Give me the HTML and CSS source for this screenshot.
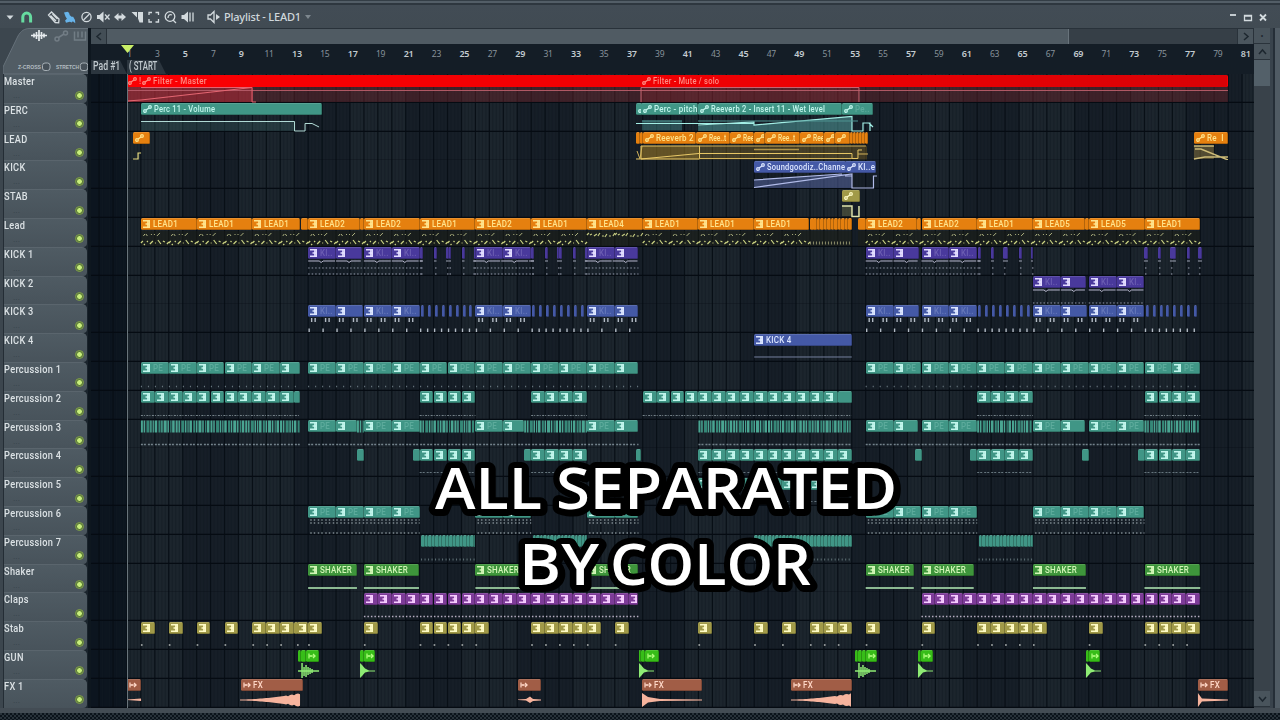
FILE: index.html
```html
<!DOCTYPE html>
<html lang="en">
<head>
<meta charset="UTF-8">
<meta name="viewport" content="width=device-width, initial-scale=1.0">
<title>Playlist - LEAD1</title>
<link rel="stylesheet" href="styles.css">
</head>
<body>
  <div id="frameTop"></div>
  <div id="toolbar">
    <svg class="tools" width="200" height="23" viewBox="0 0 200 23">
      <path class="solid" d="M6.500 10.500h7l-3.500 4z"/>
      <path class="magnet" d="M22.800 17.500v-5.500a3.900 3.900 0 0 1 7.800 0v5.500"/>
      <path class="line" d="M48.500 10l3-3 7.500 7-.3 3.800-3.500-.3zM50.500 10.500l5.500 5.500M52.500 9l5 5"/>
      <path class="brush" d="M64 7.500l3.500-.8 1.500 1 .8 2.600 2.200 1.800 1-.6 2 3.500.3 3.200-2.500-2-1 1.200-2-.7-3.800 1-.9-2.200 1.800-1.800-1.400-2.200z"/>
      <circle class="line" cx="86.500" cy="12" r="4.600"/><path class="line" d="M83.500 15l6-6"/>
      <path class="solid" d="M97 10h2.500l4-3.500v11l-4-3.500H97z"/><path class="line" d="M105 9.500l4.500 5m0-5l-4.500 5"/>
      <path class="solid" d="M114 12l4.500-4v2.500h3V8l4.500 4-4.500 4v-2.500h-3V16z"/>
      <path class="solid" d="M131.500 7h5.500v5.500zM138 7h5v10.500h-3.500l-1.500-4z"/>
      <path class="line" d="M149 10V7.500h3M155.500 7.500h3V10M158.500 14v3h-3M152 17h-3v-3"/>
      <circle class="line" cx="170" cy="11.500" r="4.800"/><path class="line" d="M173 15l3 3M168 13c0-3 2-4 4-3"/>
      <path class="solid" d="M181.500 10h2.500l4-3.500v11l-4-3.500h-2.500z"/><path class="line" d="M190 7.500v9M193 7.500v9"/>
    </svg>
    <svg class="speaker" width="14" height="14" viewBox="0 0 14 14">
      <path class="line" d="M1 5h2.500l3.500-3.500v11L3.500 9H1z"/><path class="solid" d="M9 4l4 3-4 3z"/>
    </svg>
    <span class="title">Playlist - LEAD1</span>
    <span class="caret"></span>
    <span class="winbuttons">
      <svg width="40" height="14" viewBox="0 0 40 14">
        <path class="thick" d="M2 4h6"/>
        <path class="line" d="M16.500 4.500h7v5h-7zM16.500 5h7"/>
        <path class="thick" d="M32 3.500l6 6m0-6l-6 6"/>
      </svg>
    </span>
  </div>

  <div id="window">
    <div id="side">
      <div id="corner">
        <svg width="86" height="46" viewBox="3 0 86 46">
          <path class="tab" d="M3 46V39L18 8C21 3 24 .5 30 .5H91V46z"/>
          <path class="wave" d="M31 7.500h16M34 5.500v4M36.500 4v7M39 2v11M41.500 4v7M44 5.500v4"/>
          <g class="off"><circle cx="57" cy="11" r="2"/><circle cx="65.500" cy="5" r="2"/><path d="M58.500 9.500l5.500-3.500"/><path d="M74.500 3.500v8.500h11v-8.500M78 3.500v6M82 3.500v6"/></g>
          <rect class="box" x="42.500" y="35" width="7.500" height="7.500" rx="2.500"/>
          <rect class="box" x="80.300" y="35" width="7.500" height="7.500" rx="2.500"/>
          <text x="18" y="41" textLength="23" lengthAdjust="spacingAndGlyphs">Z-CROSS</text>
          <text x="56" y="41" textLength="23" lengthAdjust="spacingAndGlyphs">STRETCH</text>
        </svg>
      </div>
      <div id="names"></div>
    </div>

    <div id="main">
      <div id="hscroll">
        <span class="arrow"><svg width="8" height="9" viewBox="0 0 8 9"><path d="M6 1L2 4.500 6 8"/></svg></span>
        <span class="thumb"></span>
        <span class="arrow end"><svg width="8" height="9" viewBox="0 0 8 9"><path d="M2 1l4 3.500L2 8"/></svg></span>
      </div>
      <div id="ruler">
        <div id="numbers"></div>
        <div id="markers"><span class="marker pad"><b>Pad #1</b></span><span class="marker start"><b>( START</b></span></div>
        <svg class="playpos" width="13" height="8" viewBox="0 0 13 8"><path d="M0 0h13L6.500 8z"/></svg>
      </div>
      <div id="lanes"><div class="playline"></div></div>
    </div>

    <div id="vscroll">
      <span class="cell">•</span>
      <span class="cell"><svg width="9" height="8" viewBox="0 0 9 8"><path d="M1 6l3.500-4L8 6"/></svg></span>
      <span class="thumb"></span>
      <span class="cell last"><svg width="9" height="8" viewBox="0 0 9 8"><path d="M1 2l3.500 4L8 2"/></svg></span>
    </div>
    <div id="frameRight"></div>
  </div>
  <div id="footer"></div>

  <svg id="caption" width="490" height="150" viewBox="425 455 490 150">
    <text y="508.500"><tspan x="435" textLength="107" lengthAdjust="spacingAndGlyphs">ALL</tspan> <tspan x="556" textLength="341" lengthAdjust="spacingAndGlyphs">SEPARATED</tspan></text>
    <text y="584.500"><tspan x="519" textLength="80" lengthAdjust="spacingAndGlyphs">BY</tspan> <tspan x="610" textLength="201" lengthAdjust="spacingAndGlyphs">COLOR</tspan></text>
  </svg>

  <script src="playlist.js"></script>
</body>
</html>
```
FILE: styles.css
```css
body {
  margin: 0;
  width: 1280px;
  height: 720px;
  overflow: hidden;
  display: flex;
  flex-direction: column;
  background: #444e57;
  font-family: Roboto, "Open Sans", sans-serif;
  position: relative;
}
#frameTop {
  height: 2px;
  flex: none;
  background: #535e67;
  border-top: 1px solid #343e46;
  border-bottom: 2px solid #2e373f;
}
#toolbar {
  height: 23px;
  flex: none;
  display: flex;
  align-items: center;
  background: linear-gradient(#424c55, #414b53);
}
.line, .thick { fill: none; stroke: #d3dade; stroke-width: 1.3; }
.thick { stroke-width: 1.8; }
.solid { fill: #d3dade; }
.magnet { fill: none; stroke: #66dba0; stroke-width: 3; }
.brush { fill: #67b3e9; }
.speaker { margin-left: 7px; }
.title {
  margin-left: 3px;
  color: #d0d8dc;
  font: 500 11px "Noto Sans", sans-serif;
  letter-spacing: -0.2px;
}
.caret {
  margin-left: 4px;
  border: 3px solid transparent;
  border-top: 4px solid #7d878e;
  border-bottom: 0;
}
.winbuttons { margin-left: auto; margin-right: 12px; height: 14px; }
#window { display: flex; flex: none; height: 680px; }

/* track names */
#side { width: 88px; box-sizing: border-box; flex: none; padding-left: 3px; background: #3c464e; }
#corner { height: 46px; }
#corner svg { display: block; }
.tab { fill: #515c64; stroke: #66717a; }
.wave { fill: none; stroke: #e6ebee; stroke-width: 1.7; }
.off { fill: none; stroke: #727d85; stroke-width: 1.5; }
.box { fill: #465058; stroke: #a5aeb4; }
#corner text { font: bold 6px "Liberation Sans", sans-serif; fill: #b3bcc1; }
#names { border-left: 1px solid #242d35; background: #1a242c; }
.name {
  height: 28.8px;
  box-sizing: border-box;
  border-top: 1px solid #5a656d;
  border-radius: 0 5px 4px 0;
  background: linear-gradient(#4f5b63, #48535b);
  padding: 0 4px 0 0;
  display: grid;
  grid-template-rows: 13px 14px;
  color: #dce2e5;
  font-size: 11.5px;
  line-height: 12.5px;
  white-space: nowrap;
  margin-right: 1px;
}
.name b {
  font-weight: 500;
  letter-spacing: 0.4px;
  justify-self: start;
  transform: scaleX(0.8);
  transform-origin: 0 0;
}
.name span { display: flex; justify-content: space-between; align-items: center; line-height: 8px; }
.name span::before { content: "..."; color: #37424a; font-size: 9px; margin-left: 9px; }
.name i {
  width: 5px;
  height: 5px;
  border-radius: 50%;
  background: #c8ee7c;
  border: 1px solid #4d6d2b;
  outline: 1px solid #80a244;
}

/* ruler and scroll bars */
#main { width: 1166px; flex: none; border-left: 3px solid #0e171f; box-sizing: border-box; }
#hscroll { height: 15px; display: flex; background: #363f47; border-top: 1px solid #29323a; }
#hscroll .thumb { width: 961px; background: #505b63; border-right: 1px solid #68737b; }
.arrow { width: 15px; display: flex; align-items: center; justify-content: center; background: #434e56; border-right: 1px solid #29323a; }
.arrow.end { margin-left: auto; border-left: 1px solid #29323a; background: #4b565e; }
.arrow path, .cell path { fill: none; stroke: #1d272f; stroke-width: 1.5; }
#ruler { height: 30px; background: #141d26; position: relative; }
#numbers { height: 12px; padding-top: 4px; margin-left: 24.5px; display: flex; }
.num { flex: none; width: 27.92px; text-align: center; color: #87929a; font: 8.500px/12px "Noto Sans", sans-serif; letter-spacing: -0.3px; }
.num.strong { color: #c3cbd0; font-weight: 600; font-size: 9px; }
.num:first-child { color: #87929a; font-weight: 400; }
#markers { display: flex; height: 14px; font-size: 12px; line-height: 13px; color: #c3cbd0; }
.marker { background: #2b353e; white-space: nowrap; box-sizing: border-box; padding-left: 1.5px; }
.marker b { display: inline-block; font-weight: 500; transform: scaleX(0.72); transform-origin: 0 0; }
.pad { width: 36px; clip-path: polygon(0 0, 80% 0, 100% 100%, 0 100%); }
.start { width: 39px; clip-path: polygon(0 0, 82% 0, 100% 100%, 0 100%); }
.start b { transform: scaleX(0.65); }
.playpos { position: absolute; left: 30px; top: 1px; }
.playpos path { fill: #c9ee67; }
#lanes { position: relative; background: #1a242d; }
.playline { position: absolute; z-index: 3; left: 35.5px; top: 0; bottom: 0; width: 1px; background: #69747b; }
.lane { height: 28.8px; position: relative; overflow: hidden; }
.lane svg { display: block; overflow: hidden; }
.shade-dark { fill: #161e27; }
.shade-light { fill: #1c252d; }
.shade-out { fill: #0c151f; }
.gridline { stroke: #080f16; stroke-width: 1.2; }
.subline { stroke: #121a22; stroke-width: 0.5; }
.laneline { stroke: #050b12; stroke-width: 1.6; }

/* clips sit on the timeline at their own start */
.clip {
  position: absolute;
  top: 0.5px;
  height: 12px;
  box-sizing: border-box;
  border-radius: 1.5px;
  border: 1px solid rgba(0, 0, 0, 0.22);
  border-top-color: rgba(255, 255, 255, 0.12);
  border-left-width: 0;
  display: flex;
  align-items: center;
  overflow: hidden;
  white-space: nowrap;
  font-size: 9.5px;
  font-weight: 500;
  line-height: 10px;
}
.clip svg { flex: none; margin-left: 2px; margin-right: 2px; }
.clip .pat path { fill: none; stroke: currentColor; stroke-width: 1.4; }
.clip .auto { fill: none; stroke: currentColor; stroke-width: 1.3; }
.clip .aud { fill: none; stroke: currentColor; stroke-width: 1.2; }
.clip span, .clip em { flex: none; transform: scaleX(0.84); transform-origin: 0 0; letter-spacing: 0.3px; }
.clip em { font-style: normal; opacity: 0.22; }
.clip .tight { transform: scaleX(0.79); }
.clip .narrow { transform: scaleX(0.7); letter-spacing: 0; }
.red { background: linear-gradient(90deg, #fb0003, #ed0003 60%, #d90206); color: #ff8f83; border-color: transparent; }
.redtext { background: none; border: 0; color: #ff8b83; }
.teal { background: #409686; color: #c2f6ed; }
.orange { background: #e5800f; color: #ffe38c; }
.purple { background: #49399c; color: #e2dcff; }
.blue { background: #4459a6; color: #dce6ff; }
.green { background: #3e953b; color: #d3f6b7; }
.violet { background: #7d3b98; color: #f7cdff; }
.khaki { background: #a19a48; color: #fffcc6; }
.lime { background: #37bd18; color: #b3ff81; }
.brown { background: #a15d46; color: #ffd8c8; }

#vscroll { width: 16px; flex: none; background: #39424a; display: flex; flex-direction: column; font-size: 9px; }
.cell { height: 15px; flex: none; display: flex; align-items: center; justify-content: center; background: #49545c; border-bottom: 1px solid #2a333b; color: #1d272f; }
#vscroll .thumb { height: 26px; flex: none; background: #536069; }
.cell.last { margin-top: auto; margin-bottom: 1px; }
#frameRight { flex: 1; background: linear-gradient(90deg, #39434c 0 3px, #252e37 3px 5px, #505b64 5px); }
#footer {
  flex: 1;
  border-top: 5px solid #434c54;
  background: repeating-conic-gradient(#0b131b 0 25%, #28323a 0 50%) 0 0 / 4px 4px;
}

#caption { position: absolute; left: 425px; top: 455px; filter: drop-shadow(1px 1px 0 #000); }
#caption text {
  font: 600 58px "Open Sans", sans-serif;
  fill: #fff;
  stroke: #000;
  stroke-width: 12px;
  stroke-linejoin: round;
  paint-order: stroke;
}
```
FILE: playlist.js
```js
const BAR = 13.94;      // width of one bar
const ORIGIN = 126.9;   // where bar 1 starts
const LEFT = 91;        // left edge of the lanes
const WIDTH = 1163;

const names = ["Master", "PERC", "LEAD", "KICK", "STAB", "Lead", "KICK 1", "KICK 2", "KICK 3", "KICK 4",
  "Percussion 1", "Percussion 2", "Percussion 3", "Percussion 4", "Percussion 5", "Percussion 6",
  "Percussion 7", "Shaker", "Claps", "Stab", "GUN", "FX 1"];

const icons = {
  pat: '<svg class="pat" width="8" height="8" viewBox="0 0 8 8"><path d="M0 .8h7M2.500 4h4M0 7.200h7M6.300 0v8M4.800 0v8"/></svg>',
  auto: '<svg class="auto" width="9" height="8" viewBox="0 0 9 8"><circle cx="2" cy="6" r="1.300"/><circle cx="7" cy="2" r="1.300"/><path d="M3 5l3-2"/></svg>',
  aud: '<svg class="aud" width="8" height="8" viewBox="0 0 8 8"><path d="M1 1.500v5M1 4h6.500M5 2l2.200 2L5 6M3 3v2"/></svg>'
};

const px = b => ORIGIN + b * BAR;
const lanes = names.map(() => ({ clips: "", art: "" }));

function clip(row, x1, x2, color, icon, text, faint) {
  let fit = "";
  if (text && text.length > 15) fit = ' class="tight"';
  if (text && text.startsWith("Ree") && text.length < 8) fit = ' class="narrow"';
  const label = text ? (faint ? `<em>${text}</em>` : `<span${fit}>${text}</span>`) : "";
  lanes[row].clips += `<div class="clip ${color}" style="left:${(x1 - LEFT).toFixed(1)}px;width:${(x2 - x1).toFixed(1)}px">${icon ? icons[icon] : ""}${label}</div>`;
}
// same as clip, but the ends are counted in bars
function bars(row, b1, b2, color, icon, text, faint) {
  clip(row, px(b1), px(b2), color, icon, text, faint);
}
function run(row, from, to, step, color, icon, text) {
  for (let b = from; b < to - 0.1; b += step) {
    const end = Math.min(b + step, to);
    bars(row, b, end, color, icon, end - b < step - 0.1 ? "" : text, true);
  }
}
function path(row, d, stroke, fill, width) {
  lanes[row].art += `<path d="${d}" stroke="${stroke}" stroke-width="${width || 1}" fill="${fill || "none"}"/>`;
}
function dots(row, b1, b2, y, dash, color, h) {
  lanes[row].art += `<path d="M${px(b1)} ${y}H${px(b2)}" stroke="${color}" stroke-width="${h || 1}" stroke-dasharray="${dash}"/>`;
}
function area(row, x, y, w, h, fill) {
  lanes[row].art += `<rect x="${x}" y="${y}" width="${w}" height="${h}" fill="${fill}"/>`;
}

// Master
clip(0, 127, 1228, "red");
clip(0, 126, 141, "redtext", "auto", "!");
clip(0, 140, 260, "redtext", "auto", "Filter - Master");
clip(0, 640, 780, "redtext", "auto", "Filter - Mute / solo");
area(0, 127, 13, 1101, 15, "rgba(125,40,45,.38)");
area(0, 127, 13, 126, 15, "rgba(225,50,65,.4)");
area(0, 641, 13, 218, 15, "rgba(190,50,60,.2)");
path(0, "M127 16.500H1228", "#b35a66");
path(0, "M127 27L141 26 252 13.500M141 13.500H252V28H256", "#e56672");
path(0, "M641 28V13.500H859V28", "#c86672");

// PERC
clip(1, 140.500, 322, "teal", "auto", "Perc 11 - Volume");
clip(1, 636, 642, "teal", "auto");
clip(1, 641, 698, "teal", "auto", "Perc - pitch");
clip(1, 698, 842, "teal", "auto", "Reeverb 2 - Insert 11 - Wet level");
clip(1, 842, 873, "teal", "auto", "Pe..", true);
path(1, "M141 28V18.500H294.500V28", "none", "rgba(70,125,125,.25)");
path(1, "M141 18.500H294.500V28H305V20.500H312L319 24", "#b5ded9");
area(1, 642, 17.500, 40, 10, "rgba(80,155,155,.4)");
path(1, "M698 28V22.500L754 19V22L852 13.500V28", "none", "rgba(80,155,155,.55)");
path(1, "M636 20.500H754M698 22L754 19V22L852 13.500V28H863V20H870V28M869 20L873 24", "#a2eee5", "none", 1.2);
path(1, "M642 18H682M698 18H858", "#4f9693");

// LEAD automation
clip(2, 133, 150, "orange", "auto");
path(2, "M133 27H138V21H141", "#e7dc82", "none", 1.2);
clip(2, 636, 640, "orange");
clip(2, 640, 643, "orange");
clip(2, 643, 696, "orange", "auto", "Reeverb 2");
clip(2, 696, 730, "orange", "auto", "Ree..t");
clip(2, 730, 754, "orange", "auto", "Ree");
clip(2, 754, 765, "orange", "auto");
clip(2, 765, 800, "orange", "auto", "Ree..t");
clip(2, 800, 824, "orange", "auto", "Ree");
clip(2, 824, 835, "orange", "auto");
clip(2, 835, 850, "orange", "auto");
for (let x = 850; x < 868; x += 3) clip(2, x, x + 3, "orange");
area(2, 641, 14, 226, 13.500, "rgba(135,105,35,.4)");
area(2, 641, 14, 58, 13.500, "rgba(195,150,45,.25)");
path(2, "M636 27H641V14H699.500V27H641M641 27L699 21.500H852V26.500H858V18H862", "#e9c967");
path(2, "M699 14H866M699 26.500H852M858 22H868M637 19L640 27 642 14", "#d4b55b");
path(2, "M754 17.500H799", "#af944a", "none", 1.6);
clip(2, 1193.500, 1228, "orange", "auto", "Re&nbsp; I");
area(2, 1194, 14, 20, 13, "rgba(175,145,70,.4)");
path(2, "M1194 14H1214M1195 17H1201L1228 28M1194 27L1205 25H1228", "#cdbb77", "none", 1.4);

// KICK automation
clip(3, 754, 846, "blue", "auto", "Soundgoodiz..Channel");
clip(3, 845, 876, "blue", "auto", "KI..e");
path(3, "M754 28V20L842 14H852V28", "none", "rgba(90,105,170,.5)");
path(3, "M754 20L842 14M754 27.500L852 14V28H873.500V16H877M845 16H852", "#b2bce9", "none", 1.2);

// STAB automation
clip(4, 842, 860, "khaki", "auto");
area(4, 842, 17, 10, 10, "rgba(150,150,85,.3)");
path(4, "M842 17H852V27.500H859V17", "#dfe4ac", "none", 1.5);

// Lead
[[1, 5, "LEAD1"], [5, 9, "LEAD1"], [9, 12.45, "LEAD1"], [12.45, 13], [13, 16.7, "LEAD2"], [16.7, 17], [17, 21, "LEAD2"],
 [21, 25, "LEAD1"], [25, 29, "LEAD2"], [29, 33, "LEAD1"], [33, 37, "LEAD4"], [37, 41, "LEAD1"], [41, 45, "LEAD1"],
 [45, 48.95, "LEAD1"], [52.45, 53], [53, 56.7, "LEAD2"], [56.7, 57], [57, 61, "LEAD2"], [61, 65, "LEAD1"],
 [65, 68.7, "LEAD5"], [68.7, 69], [69, 73, "LEAD5"], [73, 77, "LEAD1"]
].forEach(([a, b, t]) => bars(5, a, b, "orange", t && "pat", t));
for (let b = 49; b < 52; b += 0.25) bars(5, b, b + 0.25, "orange");
area(5, 141, 13, 711, 15, "rgba(28,29,20,.5)");
area(5, 858, 13, 342, 15, "rgba(28,29,20,.5)");
for (let b = 1; b < 77; b += 2) {
  if (b === 51 || b === 49) continue;
  const x = px(b);
  if (b === 33 || b === 35) {
    path(5, `M${x} 17l2-2m1 2l2-1m2 2l3-2m1 2l2-3m2 3h2m1 1l2-3m2 2h2m2 0l2-3`, "#c5cb82", "none", 1.2);
    continue;
  }
  path(5, `M${x + 2.5} 18l1.500-2M${x + 5} 16l1.500 2M${x + 10} 16.500h1M${x + 13} 16.500h1M${x + 16} 18l3-3`, "#aeb281");
  path(5, `M${x} 25l2-2m1 4l1-1m2-3l1 1m2 2l3-3m2 2h1m2-3l3 4m2-3l2 1m2 2l2-2`, "#cdd583", "none", 1.2);
}
dots(5, 49, 52, 25, "1 2", "#8a8b68", 3);

// KICK 1 and KICK 2
function kickNotes(row, b1, b2, two) {
  for (let b = b1; b < b2; b += 2) {
    const x = px(b), end = Math.min(px(b + 2), px(b2));
    if (end - x < 16) path(row, `M${x} 14H${end}`, "#b9b9cf");
    else path(row, `M${x} 14H${x + 11}l2 1.500 2-1.500H${end - 1}`, "#b9b9cf");
  }
  if (two) dots(row, b1, b2, 21, "1.5 2", "#9097a8");
  dots(row, b1, b2, 27, "1.5 2", "#959cad");
}
[[13, 15], [15, 16.85], [17, 19], [19, 21], [25, 27], [27, 29], [33, 35], [35, 36.7], [53, 55], [55, 56.8], [57, 59], [59, 61]]
  .forEach(([a, b]) => bars(6, a, b, "purple", "pat", b - a < 1.9 ? "" : "KI..", true));
[[13, 16.85], [17, 21.2], [24.85, 29.2], [32.85, 36.7], [53, 56.8], [57, 61.2]].forEach(([a, b]) => kickNotes(6, a, b, true));
[[420, 423], [434, 436.500], [446, 448.500], [448.500, 451], [462, 464.500], [473.500, 476], [531, 534], [545, 548], [557, 559], [559, 562],
 [573, 576], [585, 587.500], [978, 981], [991, 994], [1003, 1008], [1019, 1022], [1031, 1033], [1144, 1148], [1158, 1161],
 [1170, 1176], [1187, 1190], [1198, 1202]].forEach(([a, b]) => {
  clip(6, a, b, "purple");
  path(6, `M${a} 14H${b}M${a + 1} 21h1.500M${a + 1} 27h1.500`, "#a3a8b9");
});
[[65, 67], [67, 68.8], [69, 71], [71, 73]].forEach(([a, b]) => bars(7, a, b, "purple", "pat", b - a < 1.9 ? "" : "KI..", true));
kickNotes(7, 65, 68.8);
kickNotes(7, 69, 73);

// KICK 3
[[13, 15], [15, 16.95], [17, 19], [19, 21], [25, 27], [27, 29], [33, 35], [35, 36.7], [53, 55], [55, 56.8], [57, 59], [59, 61],
 [65, 67], [67, 68.9], [69, 71], [71, 73]].forEach(([a, b]) => {
  bars(8, a, b, "blue", "pat", b - a < 1.98 ? "" : "KI..", true);
  for (let i = 0; i < 2; i++) {
    const x = px(a + i);
    path(8, `M${x + 3.5} 14v4M${x + 7} 14v4M${x + 1} 24.500v3.500`, "#b2bac4", "none", 1.4);
  }
});
[21, 29, 61, 73].forEach(s => {
  for (let b = s; b < s + 4; b += 0.5) {
    clip(8, px(b) + 1, px(b) + 4, "blue");
    path(8, `M${px(b) + 1} 24.500v3.500`, "#b2bac4", "none", 1.4);
  }
});

// KICK 4
bars(9, 45, 52, "blue", "pat", "KICK 4");
dots(9, 45, 52, 24, "none", "#75819f");

// Percussion
const stripes = (row, a, b) => {
  let i = 0;
  for (let x = px(a); x < px(b) - 1; i++) {
    const w = [2, 1.500, 3, 1.500, 1.200, 2.500][i % 6];
    area(row, x.toFixed(1), 0.5, Math.min(w, px(b) - x), 12, i % 4 === 2 ? "#358777" : "#4aa592");
    x += w + [0.8, 1.300, 0.700, 1][i % 4];
  }
};
run(10, 1, 12.45, 2, "teal", "pat", "PE");
run(10, 13, 36.7, 2, "teal", "pat", "PE");
run(10, 53, 77, 2, "teal", "pat", "PE");
[[1, 12.4], [13, 36.7], [53, 77]].forEach(([a, b]) => dots(10, a, b, 24.500, "1 6", "#707f87", 1.5));

run(11, 1, 12, 1, "teal", "pat");
bars(11, 12, 12.45, "teal");
[[21, 25], [29, 33], [37, 51], [61, 65], [73, 77]].forEach(([a, b]) => run(11, a, b, 1, "teal", "pat"));
bars(11, 51, 52, "teal");
[[1, 12.4], [21, 25], [29, 33], [37, 52], [61, 65], [73, 77]].forEach(([a, b]) => dots(11, a, b, 24.500, "2 1 1 1.5", "#77858c"));

[[13, 15], [15, 16.5], [17, 19], [19, 21], [25, 27], [27, 28.5], [33, 35], [35, 36.7], [53, 55], [55, 56.75], [57, 59], [59, 61],
 [65, 67], [67, 68.75], [69, 71], [71, 73]].forEach(([a, b]) => bars(12, a, b, "teal", "pat", b - a < 1.9 ? "" : "PE", true));
[[1, 12.45], [16.5, 17], [21, 25], [28.5, 33], [41, 52], [61, 65], [73, 77]].forEach(([a, b]) => stripes(12, a, b));
[[1, 12.4], [13, 36.7], [41, 52], [53, 77]].forEach(([a, b]) => dots(12, a, b, 24.500, "2 1 2 2", "#73828b", 1.5));

[[16.5, 17], [20.5, 21], [28.5, 29], [36.5, 36.9], [56.5, 57], [60.5, 61], [68.5, 69], [72.5, 73]].forEach(([a, b]) => bars(13, a, b, "teal"));
[[21, 25], [29, 33], [41, 52], [61, 65], [73, 77]].forEach(([a, b]) => {
  run(13, a, b, 1, "teal", "pat");
  dots(13, a, b, 24.500, "2 1 2 2", "#68777f");
});
run(14, 41, 52, 2, "teal", "pat");
dots(14, 41, 52, 24.500, "2 2", "#68777f");

[[13, 21], [25, 29], [33, 36.7], [53, 61], [65, 73]].forEach(([a, b]) => {
  run(15, a, b, 2, "teal", "pat", "PE");
  dots(15, a + 0.15, b, 14, "1.5 2 1.5 2.5", "#7b878d", 1.5);
  dots(15, a + 0.15, b, 17, "1.5 2 1.5 2.5", "#7b878d", 1.5);
  dots(15, a + 0.15, b, 27, "1.5 2 1.5 2.5", "#7b878d", 1.5);
});
[[21.1, 25], [29.1, 33], [45, 52], [61.1, 65]].forEach(([a, b]) => {
  for (let x = px(a); x < px(b) - 1; x += 3.5) clip(16, x, Math.min(x + 3.5, px(b)), "teal");
  dots(16, a, b, 24.500, "1 2.5", "#5e7075", 2);
});

// Shaker
[[13, 16.5], [17, 20.95], [25, 29], [33, 36.7], [53, 56.45], [57, 60.75], [65, 68.8], [73, 77]].forEach(([a, b]) => {
  bars(17, a, b, "green", "pat", "SHAKER");
  dots(17, a, b, 24, "none", "#8cb992", 1.8);
});

// Claps
[[17, 36.7], [57, 77]].forEach(([a, b]) => {
  run(18, a, b, 1, "violet", "pat");
  dots(18, a, b, 24.500, "1.5 2", "#b5adc0", 1.3);
});

// Stab
bars(19, 12, 12.3, "khaki");
[1, 3, 5, 7, 9, 10, 11, 12.2, 13, 17, 21, 22, 23, 24, 25, 29, 30, 31, 32, 33, 35, 41, 45, 47, 49, 50, 51, 53, 57,
 61, 62, 63, 64, 65, 69, 73, 74, 75, 76].forEach(b => {
  bars(19, b, b === 12.2 ? 13 : b + 1, "khaki", "pat");
  dots(19, b, b + 0.12, 24, "none", "#b4b9b7", 1.5);
});

// GUN: short hits
function hit(x) {
  path(20, `M${x} 13V28L${x + 2} 26 ${x + 5} 22.500 ${x + 9} 21.500H${x + 15}V20.500H${x + 9}L${x + 5} 18.500 ${x + 2} 15z`, "none", "#8eec74");
}
[[298, 301], [301, 306], [360, 364], [639, 641], [641, 645], [855, 858], [858, 862], [862, 866], [918, 921], [1085.500, 1089]].forEach(([a, b]) => clip(20, a, b, "lime"));
[[306, 319], [364, 375], [645, 659], [866, 877], [921, 933], [1089, 1100]].forEach(([a, b]) => clip(20, a, b, "lime", "aud"));
[360, 639, 918, 1086].forEach(hit);
[298, 855].forEach(x => {
  path(20, `M${x} 21H${x + 21}M${x + 4} 13V28M${x + 6} 17V26M${x + 8} 15V27M${x + 10} 17V25M${x + 12} 18V24M${x + 14} 19V23`, "#8eec74", "none", 1.5);
});

// FX 1
[[127, 140.500, ""], [240.500, 302.500, "FX"], [518, 541, ""], [642, 702, "FX"], [791, 852, "FX"], [1198, 1228, "FX"]].forEach(([a, b, t]) => clip(21, a, b, "brown", "aud", t));
function swell(x1, x2) {
  let top = `M${x1} 21`, bottom = "";
  for (let x = x1; x <= x2; x += 2) {
    const k = (x - x1) / (x2 - x1);
    const h = 0.5 + 6.5 * Math.pow(k, 1.8) + (k > 0.7 && x % 3 < 1 ? -1 : 0);
    top += `L${x} ${(21 - h).toFixed(1)}`;
    bottom = `L${x} ${(21 + h).toFixed(1)}` + bottom;
  }
  path(21, top + bottom + "z", "none", "#f6b39d");
}
swell(240, 301);
swell(791, 852);
path(21, "M642 14V28L648 23.500 660 22 702 21.500V20.500L660 20 648 18z", "none", "#f6b39d");
path(21, "M1198 14V28L1202 22.500 1228 21.500V20.500L1202 19.500z", "none", "#f6b39d");
path(21, "M127 20.500L141 19.500V22L127 21z M518 20.500L526 20 530 17.500 533 20 541 20.500V21.500L533 22 530 24 526 21.500 518 21z", "none", "#f6b39d");

// backdrop shared by all lanes
let grid = `<rect class="shade-out" x="91" y="0" width="36" height="29"/>`;
for (let b = 0; b < 81; b += 4) grid += `<rect class="${b % 8 ? "shade-dark" : "shade-light"}" x="${px(b)}" y="0" width="${BAR * 4}" height="29"/>`;
for (let b = -2; b < 81; b++) {
  grid += `<path class="gridline" d="M${px(b).toFixed(1)} 0V29"/>`;
  for (let q = 1; q < 4; q++) grid += `<path class="subline" d="M${(px(b + q / 4)).toFixed(1)} 0V29"/>`;
}

document.getElementById("names").innerHTML = names.map(n => `<div class="name"><b>${n}</b><span><i></i></span></div>`).join("");
document.getElementById("lanes").innerHTML += lanes.map(l =>
  `<div class="lane"><svg width="${WIDTH}" height="28.800" viewBox="${LEFT} 0 ${WIDTH} 28.800">${grid}<path class="laneline" d="M91 28.500H1254"/>${l.art}</svg>${l.clips}</div>`).join("");

let nums = "";
for (let n = 1; n <= 81; n += 2) nums += `<span class="num ${n % 4 === 1 ? "strong" : ""}">${n}</span>`;
document.getElementById("numbers").innerHTML = nums;
```
